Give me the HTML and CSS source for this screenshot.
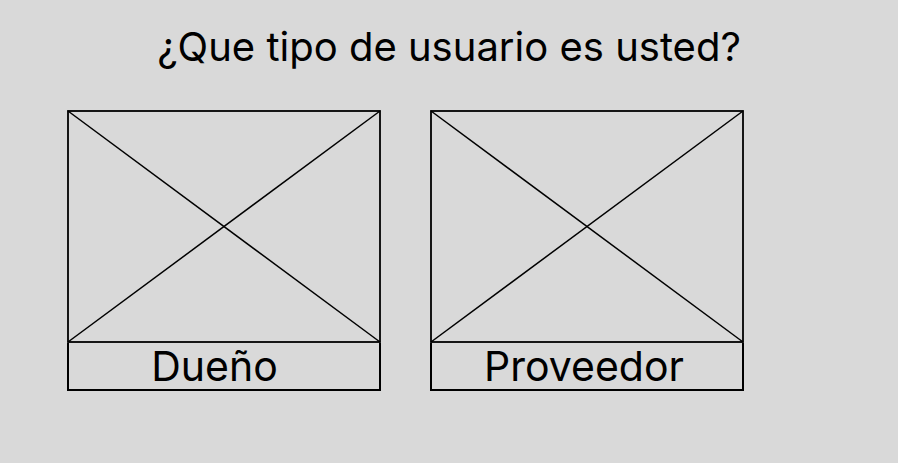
FILE: index.html
```html
<!DOCTYPE html>
<html lang="es">
<head>
    <meta charset="UTF-8">
    <meta name="viewport" content="width=device-width, initial-scale=1.0">
    <title>Tipo de usuario</title>
    <link rel="stylesheet" href="styles.css">
</head>
<body>
    <div class="page">
        <h1 class="title">¿Que tipo de usuario es usted?</h1>
        <div class="choices">
            <div class="card">
                <svg class="placeholder" viewBox="0 0 314 233" preserveAspectRatio="none">
                    <rect x="1" y="1" width="312" height="231" fill="none" stroke="#000" stroke-width="1.8"/>
                    <line x1="1" y1="1" x2="313" y2="232" stroke="#000" stroke-width="1.5"/>
                    <line x1="313" y1="1" x2="1" y2="232" stroke="#000" stroke-width="1.5"/>
                </svg>
                <div class="label label-owner">Dueño</div>
            </div>
            <div class="card">
                <svg class="placeholder" viewBox="0 0 314 233" preserveAspectRatio="none">
                    <rect x="1" y="1" width="312" height="231" fill="none" stroke="#000" stroke-width="1.8"/>
                    <line x1="1" y1="1" x2="313" y2="232" stroke="#000" stroke-width="1.5"/>
                    <line x1="313" y1="1" x2="1" y2="232" stroke="#000" stroke-width="1.5"/>
                </svg>
                <div class="label label-provider">Proveedor</div>
            </div>
        </div>
    </div>
</body>
</html>
```

FILE: styles.css
```css
body {
    margin: 0;
    padding: 0;
    background: #d9d9d9;
    font-family: 'Inter', 'Liberation Sans', sans-serif;
    color: #000;
}
.page {
    width: 898px;
    height: 463px;
    overflow: hidden;
}
.title {
    margin: 0;
    padding-top: 23px;
    font-size: 40px;
    font-weight: 400;
    line-height: 48px;
    text-align: center;
}
.choices {
    display: flex;
    gap: 49px;
    padding-left: 67px;
    margin-top: 39px;
}
.card {
    width: 314px;
    display: flex;
    flex-direction: column;
}
.placeholder {
    display: block;
    width: 314px;
    height: 233px;
}
.label {
    height: 42px;
    padding-top: 2px;
    padding-bottom: 2px;
    border: 2px solid #000;
    border-top: none;
    font-size: 41px;
    line-height: 42px;
    text-align: center;
}
.label-owner {
    padding-right: 19px;
}
.label-provider {
    padding-right: 6px;
}
```
